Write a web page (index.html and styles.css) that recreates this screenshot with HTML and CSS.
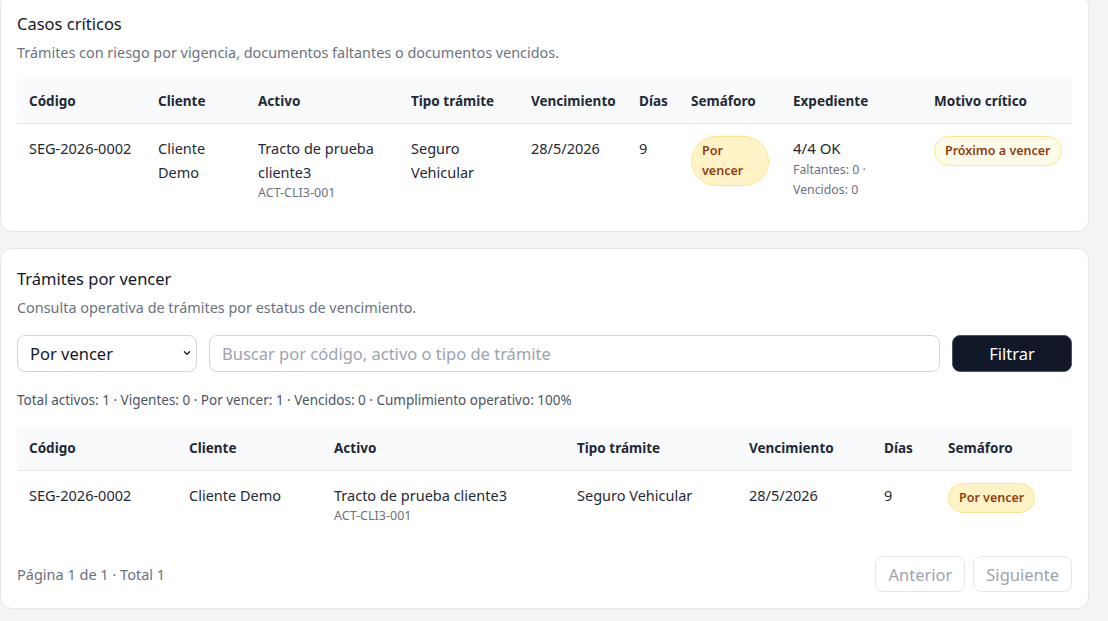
FILE: index.html
```html
<!DOCTYPE html>
<html lang="es">
<head>
<meta charset="utf-8">
<title>Trámites</title>
<link rel="stylesheet" href="styles.css">
</head>
<body>
<main class="page">
  <section class="card card-first">
    <h2 class="card-title">Casos críticos</h2>
    <p class="card-sub">Trámites con riesgo por vigencia, documentos faltantes o documentos vencidos.</p>
    <table class="tbl tbl-critical">
      <colgroup>
        <col class="c1-codigo"><col class="c1-cliente"><col class="c1-activo"><col class="c1-tipo"><col class="c1-venc"><col class="c1-dias"><col class="c1-sem"><col class="c1-exp"><col class="c1-motivo">
      </colgroup>
      <thead>
        <tr><th>Código</th><th>Cliente</th><th>Activo</th><th>Tipo trámite</th><th>Vencimiento</th><th>Días</th><th>Semáforo</th><th>Expediente</th><th>Motivo crítico</th></tr>
      </thead>
      <tbody>
        <tr>
          <td class="nowrap">SEG-2026-0002</td>
          <td>Cliente Demo</td>
          <td>Tracto de prueba cliente3<div class="sub">ACT-CLI3-001</div></td>
          <td>Seguro Vehicular</td>
          <td>28/5/2026</td>
          <td>9</td>
          <td><span class="badge badge-warn">Por vencer</span></td>
          <td><span class="exp-main">4/4 OK</span><div class="sub sub-lg">Faltantes: 0 · Vencidos: 0</div></td>
          <td><span class="badge badge-soft nowrap">Próximo a vencer</span></td>
        </tr>
      </tbody>
    </table>
  </section>

  <section class="card">
    <h2 class="card-title">Trámites por vencer</h2>
    <p class="card-sub">Consulta operativa de trámites por estatus de vencimiento.</p>
    <div class="filters">
      <div class="select-wrap">
        <select class="select">
          <option>Por vencer</option>
        </select>
        <svg class="chev" width="10" height="10" viewBox="0 0 10 10" aria-hidden="true"><path d="M2.4 3.8 L5 6.4 L7.6 3.8" fill="none" stroke="#111827" stroke-width="1.3" stroke-linecap="round" stroke-linejoin="round"/></svg>
      </div>
      <input class="search" type="text" placeholder="Buscar por código, activo o tipo de trámite">
      <button class="btn-dark" type="button">Filtrar</button>
    </div>
    <p class="stats">Total activos: 1 · Vigentes: 0 · Por vencer: 1 · Vencidos: 0 · Cumplimiento operativo: 100%</p>
    <table class="tbl tbl-list">
      <colgroup>
        <col class="c2-codigo"><col class="c2-cliente"><col class="c2-activo"><col class="c2-tipo"><col class="c2-venc"><col class="c2-dias"><col class="c2-sem">
      </colgroup>
      <thead>
        <tr><th>Código</th><th>Cliente</th><th>Activo</th><th>Tipo trámite</th><th>Vencimiento</th><th>Días</th><th>Semáforo</th></tr>
      </thead>
      <tbody>
        <tr>
          <td>SEG-2026-0002</td>
          <td>Cliente Demo</td>
          <td>Tracto de prueba cliente3<div class="sub">ACT-CLI3-001</div></td>
          <td>Seguro Vehicular</td>
          <td>28/5/2026</td>
          <td>9</td>
          <td><span class="badge badge-warn">Por vencer</span></td>
        </tr>
      </tbody>
    </table>
    <div class="pager">
      <span class="pager-info">Página 1 de 1 · Total 1</span>
      <div class="pager-btns">
        <button class="btn-light" type="button" disabled>Anterior</button>
        <button class="btn-light" type="button" disabled>Siguiente</button>
      </div>
    </div>
  </section>
</main>
</body>
</html>
```

FILE: styles.css
```css
* { box-sizing: border-box; }
html, body {
  margin: 0;
  padding: 0;
  background: #f3f4f6;
  font-family: "Noto Sans", "Open Sans", sans-serif;
  color: #1f2937;
  overflow: hidden;
}
.page {
  display: flex;
  flex-direction: column;
  gap: 16px;
  width: 1089px;
  margin-top: -7px;
}
.card {
  background: #ffffff;
  border: 1px solid #e5e7eb;
  border-radius: 12px;
  padding: 16px;
}
.card-title {
  margin: 0;
  font-size: 16.5px;
  line-height: 28px;
  font-weight: 400;
  color: #111827;
}
.card-sub {
  margin: 5px 0 0;
  font-size: 14.4px;
  line-height: 20px;
  color: #6b7280;
}
.tbl {
  width: 100%;
  border-collapse: collapse;
  table-layout: fixed;
  margin-top: 16px;
  font-size: 14.5px;
  line-height: 24px;
  color: #1f2937;
}
.tbl th {
  background: #f9fafb;
  text-align: left;
  font-size: 13.5px;
  line-height: 20px;
  font-weight: 700;
  color: #1f2937;
  padding: 12px;
  border-bottom: 1px solid #e5e7eb;
}
.tbl td {
  padding: 12px 12px 13px;
  vertical-align: top;
}
.nowrap { white-space: nowrap; }
.exp-main { font-size: 15px; }
.sub {
  font-size: 12.5px;
  line-height: 18px;
  color: #6b7280;
}
.sub-lg { font-size: 12.3px; line-height: 20px; }

.c1-codigo { width: 129px; }
.c1-cliente { width: 100px; }
.c1-activo { width: 153px; }
.c1-tipo { width: 120px; }
.c1-venc { width: 108px; }
.c1-dias { width: 52px; }
.c1-sem { width: 102px; }
.c1-exp { width: 141px; }
.c1-motivo { width: 150px; }

.c2-codigo { width: 160px; }
.c2-cliente { width: 145px; }
.c2-activo { width: 243px; }
.c2-tipo { width: 172px; }
.c2-venc { width: 135px; }
.c2-dias { width: 64px; }
.c2-sem { width: 136px; }

.badge {
  display: inline-block;
  font-size: 12.5px;
  line-height: 20px;
  font-weight: 600;
  color: #92400e;
  padding: 4px 10px;
  border-radius: 9999px;
  border: 1px solid #fde68a;
}
.badge-warn { background: #fef3c7; }
.badge-soft { background: #fffbeb; }

.filters {
  display: flex;
  gap: 12px;
  margin-top: 17px;
  height: 37px;
}
.select-wrap {
  position: relative;
  width: 180px;
  flex: none;
}
.select {
  appearance: none;
  -webkit-appearance: none;
  width: 100%;
  height: 100%;
  border: 1px solid #d1d5db;
  border-radius: 8px;
  background: #ffffff;
  padding: 0 28px 0 12px;
  font-family: inherit;
  font-size: 16.5px;
  color: #111827;
}
.chev {
  position: absolute;
  right: 5px;
  top: 13px;
  pointer-events: none;
}
.search {
  flex: 1;
  min-width: 0;
  border: 1px solid #d1d5db;
  border-radius: 8px;
  padding: 0 12px;
  font-family: inherit;
  font-size: 16.5px;
  color: #111827;
  background: #ffffff;
}
.search::placeholder { color: #9ca3af; }
.btn-dark {
  width: 120px;
  flex: none;
  background: #111827;
  color: #ffffff;
  border: 1px solid #4b5563;
  border-radius: 8px;
  font-family: inherit;
  font-size: 16.5px;
}
.stats {
  margin: 18px 0 0;
  font-size: 13.5px;
  line-height: 20px;
  color: #4b5563;
}
.pager {
  display: flex;
  justify-content: space-between;
  align-items: center;
  margin-top: 18px;
}
.pager-info {
  font-size: 14.5px;
  color: #6b7280;
}
.pager-btns {
  display: flex;
  gap: 8px;
}
.btn-light {
  height: 36px;
  padding: 0 12px;
  background: #ffffff;
  border: 1px solid #e5e7eb;
  border-radius: 8px;
  font-family: inherit;
  font-size: 16.5px;
  color: #9ca3af;
}
```
